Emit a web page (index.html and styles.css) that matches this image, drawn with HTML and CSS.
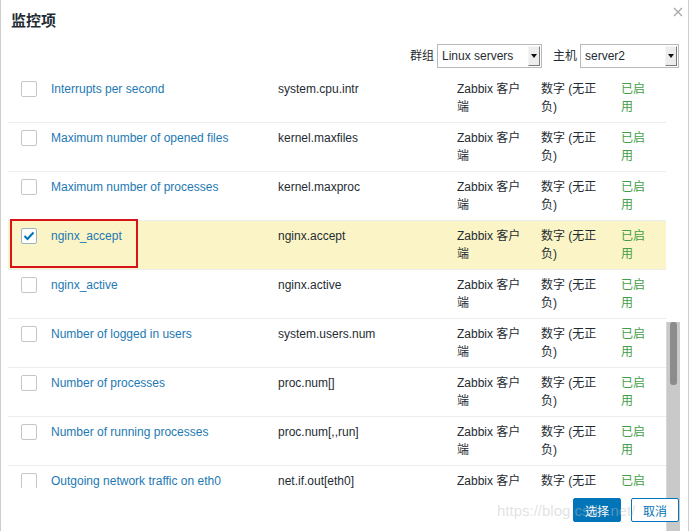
FILE: index.html
```html
<!DOCTYPE html>
<html lang="zh-CN">
<head>
<meta charset="utf-8">
<title>监控项</title>
<link rel="stylesheet" href="styles.css">
</head>
<body>
<div class="dialog">
  <div class="header">
    <h4 class="title">监控项</h4>
    <button class="close" aria-label="关闭">
      <svg width="10" height="10" viewBox="0 0 10 10"><path d="M1 1 L9 9 M9 1 L1 9" stroke="#a8a8a8" stroke-width="1.4" fill="none"/></svg>
    </button>
  </div>
  <div class="filter">
    <span class="label">群组</span>
    <div class="select sel-group"><span class="sel-text">Linux servers</span><span class="sel-btn"><span class="tri"></span></span></div>
    <span class="label label-host">主机</span>
    <div class="select sel-host"><span class="sel-text">server2</span><span class="sel-btn"><span class="tri"></span></span></div>
  </div>
  <div class="listwrap">
    <div class="list">
      <div class="row">
        <div class="c-chk"><span class="chk"></span></div>
        <div class="c-name"><a href="#">Interrupts per second</a></div>
        <div class="c-key">system.cpu.intr</div>
        <div class="c-type">Zabbix 客户端</div>
        <div class="c-vt">数字 (无正负)</div>
        <div class="c-st">已启用</div>
      </div>
      <div class="row">
        <div class="c-chk"><span class="chk"></span></div>
        <div class="c-name"><a href="#">Maximum number of opened files</a></div>
        <div class="c-key">kernel.maxfiles</div>
        <div class="c-type">Zabbix 客户端</div>
        <div class="c-vt">数字 (无正负)</div>
        <div class="c-st">已启用</div>
      </div>
      <div class="row">
        <div class="c-chk"><span class="chk"></span></div>
        <div class="c-name"><a href="#">Maximum number of processes</a></div>
        <div class="c-key">kernel.maxproc</div>
        <div class="c-type">Zabbix 客户端</div>
        <div class="c-vt">数字 (无正负)</div>
        <div class="c-st">已启用</div>
      </div>
      <div class="row selected">
        <div class="c-chk"><span class="chk checked"><svg width="12" height="10" viewBox="0 0 12 10"><path d="M1.5 5 L4.5 8 L10.5 1.5" stroke="#0275b8" stroke-width="2" fill="none"/></svg></span></div>
        <div class="c-name"><a href="#">nginx_accept</a></div>
        <div class="c-key">nginx.accept</div>
        <div class="c-type">Zabbix 客户端</div>
        <div class="c-vt">数字 (无正负)</div>
        <div class="c-st">已启用</div>
      </div>
      <div class="row">
        <div class="c-chk"><span class="chk"></span></div>
        <div class="c-name"><a href="#">nginx_active</a></div>
        <div class="c-key">nginx.active</div>
        <div class="c-type">Zabbix 客户端</div>
        <div class="c-vt">数字 (无正负)</div>
        <div class="c-st">已启用</div>
      </div>
      <div class="row">
        <div class="c-chk"><span class="chk"></span></div>
        <div class="c-name"><a href="#">Number of logged in users</a></div>
        <div class="c-key">system.users.num</div>
        <div class="c-type">Zabbix 客户端</div>
        <div class="c-vt">数字 (无正负)</div>
        <div class="c-st">已启用</div>
      </div>
      <div class="row">
        <div class="c-chk"><span class="chk"></span></div>
        <div class="c-name"><a href="#">Number of processes</a></div>
        <div class="c-key">proc.num[]</div>
        <div class="c-type">Zabbix 客户端</div>
        <div class="c-vt">数字 (无正负)</div>
        <div class="c-st">已启用</div>
      </div>
      <div class="row">
        <div class="c-chk"><span class="chk"></span></div>
        <div class="c-name"><a href="#">Number of running processes</a></div>
        <div class="c-key">proc.num[,,run]</div>
        <div class="c-type">Zabbix 客户端</div>
        <div class="c-vt">数字 (无正负)</div>
        <div class="c-st">已启用</div>
      </div>
      <div class="row">
        <div class="c-chk"><span class="chk"></span></div>
        <div class="c-name"><a href="#">Outgoing network traffic on eth0</a></div>
        <div class="c-key">net.if.out[eth0]</div>
        <div class="c-type">Zabbix 客户端</div>
        <div class="c-vt">数字 (无正负)</div>
        <div class="c-st">已启用</div>
      </div>
    </div>
    <div class="scrollbar"><div class="track"><div class="thumb"></div></div></div>
  </div>
  <div class="footer">
    <button class="btn btn-primary">选择</button>
    <button class="btn btn-alt">取消</button>
  </div>
  <div class="mark"></div>
  <div class="watermark">https://blog.csdn.net/</div>
</div>
</body>
</html>
```

FILE: styles.css
```css
* { box-sizing: border-box; }
html, body { margin: 0; padding: 0; background: #ffffff; }
body {
  font-family: "Liberation Sans", "Noto Sans CJK SC", sans-serif;
  font-size: 12px;
  line-height: 18px;
  color: #1f2c33;
}
.dialog {
  position: relative;
  width: 689px;
  height: 531px;
  border-left: 1px solid #cdcdcd;
  border-right: 1px solid #cdcdcd;
  overflow: hidden;
}
.header {
  padding: 11px 10px 0 10px;
}
.title {
  margin: 0;
  font-size: 15px;
  line-height: 20px;
  font-weight: bold;
  color: #1f2c33;
}
.close {
  position: absolute;
  top: 6px;
  right: 4px;
  width: 12px;
  height: 12px;
  padding: 1px;
  border: 0;
  background: transparent;
  display: flex;
  align-items: center;
  justify-content: center;
}
.filter {
  margin-top: 13px;
  display: flex;
  justify-content: flex-end;
  align-items: center;
  padding-right: 9px;
  height: 24px;
}
.label { margin-right: 3px; }
.label-host { margin-left: 11px; }
.select {
  height: 24px;
  border: 1px solid #b9b9b9;
  display: flex;
  align-items: stretch;
  padding: 1px 1px 1px 4px;
  background: #fff;
}
.sel-group { width: 105px; }
.sel-host { width: 99px; }
.sel-text { flex: 1; line-height: 20px; color: #1f2c33; }
.sel-btn {
  width: 12px;
  background: #ededed;
  border-top: 1px solid #f8f8f8;
  border-left: 1px solid #f4f4f4;
  border-right: 1px solid #7a7a7a;
  border-bottom: 1px solid #7a7a7a;
  display: flex;
  align-items: center;
  justify-content: center;
}
.tri {
  width: 0;
  height: 0;
  border-left: 3px solid transparent;
  border-right: 3px solid transparent;
  border-top: 4px solid #111;
}
.listwrap {
  margin-top: 6px;
  margin-left: 7px;
  display: flex;
  height: 414px;
}
.list {
  width: 658px;
  overflow: hidden;
}
.row {
  display: grid;
  grid-template-columns: 38px 227px 179px 84px 80px 50px;
  border-bottom: 1px solid #ebeef0;
}
.row > div {
  padding: 6px 5px;
  white-space: normal;
}
.row.selected { background: #fbf4c6; }
.c-chk { padding-left: 13px !important; }
.c-key { white-space: nowrap; }
.c-type { padding-right: 12px !important; }
.c-vt { padding-right: 15px !important; }
.c-st { padding-right: 14px !important; color: #429e47; }
.c-name a { color: #1d79b3; text-decoration: none; }
.chk {
  display: flex;
  align-items: center;
  justify-content: center;
  width: 16px;
  height: 16px;
  margin-top: 1px;
  border: 1px solid #c3c6c8;
  border-radius: 2px;
  background: #fff;
}
.chk.checked { border-color: #9fb3c4; }
.scrollbar {
  width: 14px;
  padding-top: 3px;
  padding-bottom: 1px;
}
.track {
  height: 100%;
  background: #c9c9c9;
  border-left: 1px solid #d8d8d8;
  padding: 0 3px;
}
.thumb {
  margin-top: 245px;
  height: 63px;
  background: #8c8c8c;
  border-radius: 3px;
}
.footer {
  margin-top: 10px;
  display: flex;
  justify-content: flex-end;
  gap: 10px;
  padding-right: 9px;
}
.btn {
  width: 48px;
  height: 24px;
  font-family: "Liberation Sans", "Noto Sans CJK SC", sans-serif;
  font-size: 12px;
  padding: 0;
  border-radius: 2px;
}
.btn-primary {
  background: #0275b8;
  border: 1px solid #0275b8;
  color: #ffffff;
}
.btn-alt {
  background: #ffffff;
  border: 1px solid #0275b8;
  color: #0275b8;
}
.mark {
  position: absolute;
  left: 9px;
  top: 219px;
  width: 128px;
  height: 49px;
  border: 2px solid #d8141a;
}
.watermark {
  position: absolute;
  left: 496px;
  top: 502px;
  font-size: 15px;
  line-height: 18px;
  color: rgba(190, 190, 190, 0.45);
  pointer-events: none;
  white-space: nowrap;
}
```
